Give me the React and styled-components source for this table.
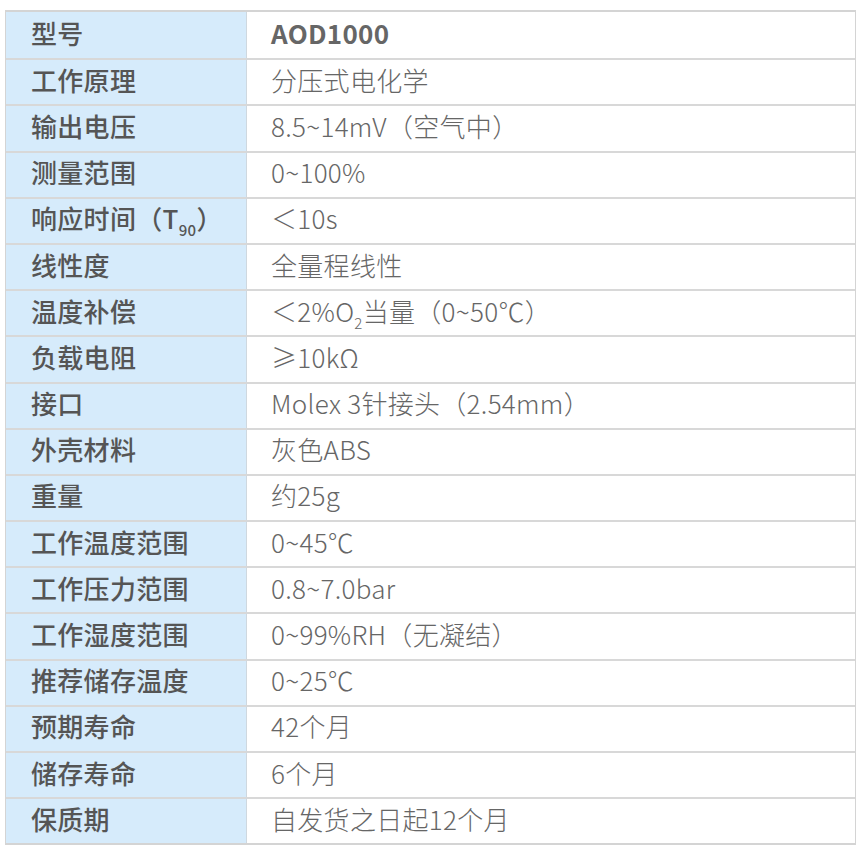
import React from 'react';
import styled, { createGlobalStyle } from 'styled-components';

const GlobalStyle = createGlobalStyle`
  html, body {
    margin: 0;
    padding: 0;
    background: #fff;
  }
`;

const Page = styled.div`
  padding: 10px 9px 0 5px;
  font-family: "Noto Sans CJK SC", "Noto Sans", sans-serif;
`;

const Table = styled.div`
  display: grid;
  grid-template-columns: 240px 1fr;
  grid-auto-rows: 46.2px;
  width: 851px;
  border: 1px solid #d4d4d4;
  border-top-width: 2px;
  border-bottom-width: 2px;
  box-sizing: border-box;
`;

const Cell = styled.div`
  display: flex;
  align-items: center;
  box-sizing: border-box;
  padding-left: ${p => (p.$label ? '25px' : '24px')};
  padding-bottom: 6px;
  border-top: ${p => (p.$first ? 'none' : '2px solid #d8d8d8')};
  border-left: ${p => (p.$label ? 'none' : '1px solid #cfd8df')};
  background: ${p => (p.$label ? '#d6ebfb' : '#fff')};
  color: ${p => (p.$label ? '#555' : '#666')};
  font-size: 26px;
  font-weight: ${p => (p.$label ? 500 : p.$bold ? 700 : 300)};
  letter-spacing: 0.3px;
  white-space: nowrap;
`;

const Sub = styled.sub`
  font-size: 15px;
  vertical-align: -7px;
  line-height: 0;
`;

const rows = [
  ['型号', 'AOD1000'],
  ['工作原理', '分压式电化学'],
  ['输出电压', '8.5~14mV（空气中）'],
  ['测量范围', '0~100%'],
  [<>响应时间（T<Sub>90</Sub>）</>, '＜10s'],
  ['线性度', '全量程线性'],
  ['温度补偿', <>＜2%O<Sub>2</Sub>当量（0~50℃）</>],
  ['负载电阻', '≥10kΩ'],
  ['接口', 'Molex 3针接头（2.54mm）'],
  ['外壳材料', '灰色ABS'],
  ['重量', '约25g'],
  ['工作温度范围', '0~45℃'],
  ['工作压力范围', '0.8~7.0bar'],
  ['工作湿度范围', '0~99%RH（无凝结）'],
  ['推荐储存温度', '0~25℃'],
  ['预期寿命', '42个月'],
  ['储存寿命', '6个月'],
  ['保质期', '自发货之日起12个月'],
];

export default function App() {
  return (
    <Page>
      <GlobalStyle />
      <Table>
        {rows.map(([label, value], i) => (
          <React.Fragment key={i}>
            <Cell $label $first={i === 0}><span>{label}</span></Cell>
            <Cell $first={i === 0} $bold={i === 0}><span>{value}</span></Cell>
          </React.Fragment>
        ))}
      </Table>
    </Page>
  );
}
